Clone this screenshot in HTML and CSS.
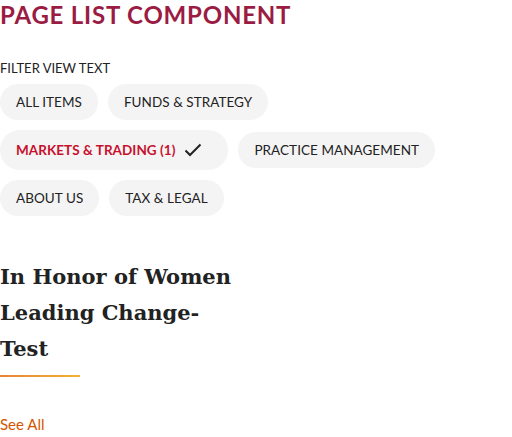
FILE: index.html
```html
<!DOCTYPE html>
<html>
<head>
<meta charset="utf-8">
<link rel="stylesheet" href="styles.css">
</head>
<body>
<div class="page">
  <h1 class="title">PAGE LIST COMPONENT</h1>
  <div class="filter-label">FILTER VIEW TEXT</div>
  <div class="chips">
    <button class="chip">ALL ITEMS</button>
    <button class="chip">FUNDS &amp; STRATEGY</button>
    <button class="chip active">MARKETS &amp; TRADING (1)
      <svg class="check" width="24" height="24" viewBox="0 0 24 24"><path d="M4.5 12.5 L9 17 L19.5 6.5" fill="none" stroke="#222" stroke-width="2"/></svg>
    </button>
    <button class="chip">PRACTICE MANAGEMENT</button>
    <button class="chip">ABOUT US</button>
    <button class="chip">TAX &amp; LEGAL</button>
  </div>
  <div class="card">
    <h2 class="card-title">In Honor of Women Leading Change-Test</h2>
    <div class="rule"></div>
  </div>
  <a class="see-all" href="#">See All</a>
</div>
</body>
</html>
```
FILE: styles.css
```css
html, body { margin: 0; padding: 0; background: #fff; }
body { font-family: Lato, "Open Sans", sans-serif; color: #222; }
.page { padding: 0; }
.title {
  margin: 0;
  padding-top: 1px;
  font-family: Lato, sans-serif;
  font-weight: 700;
  font-size: 24px;
  line-height: 28px;
  letter-spacing: 0.8px;
  color: #9b1c43;
}
.filter-label {
  margin-top: 31px;
  font-size: 13px;
  line-height: 16px;
  color: #222;
}
.chips {
  margin-top: 8px;
  display: flex;
  flex-wrap: wrap;
  align-items: center;
  gap: 10px 10px;
  width: 480px;
}
.chip {
  font-family: Lato, sans-serif;
  border: 0;
  background: #f4f4f4;
  border-radius: 20px;
  height: 36px;
  padding: 0 16px;
  font-size: 13.5px;
  color: #222;
  display: inline-flex;
  align-items: center;
  letter-spacing: 0.05px;
}
.chip.active {
  height: 40px;
  color: #c8102e;
  font-weight: 700;
  padding-right: 23px;
}
.check { margin-left: 6px; }
.card { margin-top: 43px; width: 238px; }
.card-title {
  margin: 0;
  font-family: "DejaVu Serif", serif;
  font-weight: 700;
  font-size: 21px;
  line-height: 36px;
  color: #222;
}
.rule {
  margin-top: 8px;
  width: 80px;
  height: 2px;
  background: linear-gradient(90deg, #e8843c, #f2b234);
}
.see-all {
  display: inline-block;
  margin-top: 38px;
  font-size: 15px;
  color: #d35400;
  text-decoration: none;
}
```
